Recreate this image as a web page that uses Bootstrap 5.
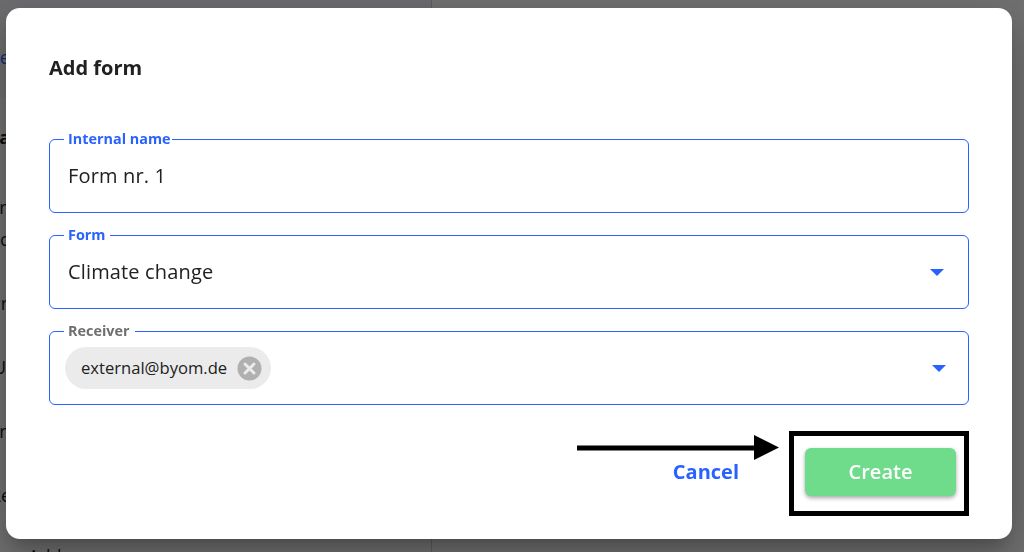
<!DOCTYPE html>
<html lang="en">
<head>
<meta charset="utf-8">
<title>Add form</title>
<link href="https://cdn.jsdelivr.net/npm/bootstrap@5.3.0/dist/css/bootstrap.min.css" rel="stylesheet">
<style>
html,body{height:100%;overflow:hidden}
body{font-family:"Open Sans","Noto Sans",sans-serif;color:#212121;background:#fff}
.page-behind{height:552px;overflow:hidden}
.page-side{width:432px;border-right:1px solid #d4d4d4;font-size:18px;line-height:20px;white-space:nowrap;position:relative}
.page-top{height:98px;background:#f6f6fa;padding-top:47px;margin-bottom:29px}
.page-side .row-txt{height:20px;margin-left:-14px}
.page-side .row-txt.near{margin-left:-10px}
.page-side .row-txt.edge{margin-left:-7px}
.page-top .row-txt{color:#2962ff}
.page-side .hd{font-weight:700;margin-bottom:50px}
.gap-a{margin-bottom:12px}
.gap-b{margin-bottom:44px}
.gap-c{margin-bottom:41px}
.page-side .tail{margin:0 0 0 28px}
.dim{position:fixed;inset:0;background:rgba(0,0,0,.56)}
.sheet{position:fixed;left:6px;top:8px;width:1006px;height:531px;background:#fff;border-radius:14px;padding:47px 43px 0;box-shadow:0 11px 15px -7px rgba(0,0,0,.2),0 24px 38px 3px rgba(0,0,0,.14),0 9px 46px 8px rgba(0,0,0,.12)}
.sheet-title{font-size:20px;font-weight:700;line-height:26px;margin:0 0 58px}
.fbox{height:74px;border:1px solid #2962ff;border-radius:6px;margin-bottom:22px;padding:0 18px;position:relative;display:flex;align-items:center;font-size:20px;letter-spacing:.15px;line-height:26px}
.fbox .flabel{position:absolute;left:14px;top:-10px;background:#fff;padding:0 5px 0 4px;font-size:14.4px;font-weight:700;letter-spacing:0;line-height:18px;color:#2962ff}
.fbox .flabel.tight{padding-right:1px}
.fbox .flabel.muted{color:#6f6f6f}
.caret{position:absolute;width:0;height:0;border-left:7px solid transparent;border-right:7px solid transparent;border-top:7px solid #2962ff;top:33px;right:24px}
.caret.c2{right:22px;top:33px}
.chip-mail{display:inline-flex;align-items:center;height:42px;background:#ebebeb;border-radius:21px;padding:0 9px 0 16px;margin-left:-3px;font-size:16.6px;letter-spacing:0;gap:10px}
.chip-x{display:block;width:25px;height:25px}
.foot{margin-top:26px;height:85px}
.btn-cancel{font-size:20px;font-weight:700;color:#2962ff;padding:0;border:0;background:none;margin-right:50px;margin-top:-3px}
.frame{width:180px;height:85px;border:5px solid #000;display:flex;align-items:flex-start;justify-content:flex-end;padding:12px 8px 0 0}
.btn-create{width:151px;height:48px;background:#6edc8a;color:#fff;border:0;border-radius:6px;font-size:20px;font-weight:600;box-shadow:0 2px 4px rgba(0,0,0,.35)}
.btn-create:hover{background:#6edc8a;color:#fff}
.pointer{position:absolute;left:571px;top:427px;width:202px;height:25px}
</style>
</head>
<body>
<div class="page-behind d-flex">
  <div class="page-side">
    <div class="page-top"><div class="row-txt near">Search</div></div>
    <div class="row-txt hd">Data</div>
    <div class="row-txt near gap-a">Fr</div>
    <div class="row-txt gap-b">Oc</div>
    <div class="row-txt near gap-b">Pr</div>
    <div class="row-txt edge gap-b">Us</div>
    <div class="row-txt near gap-b">Fr</div>
    <div class="row-txt near gap-c">Re</div>
    <div class="row-txt tail">Add</div>
  </div>
</div>
<div class="dim"></div>
<div class="sheet" role="dialog">
  <h5 class="sheet-title">Add form</h5>
  <div class="fbox"><span class="flabel tight">Internal name</span>Form nr. 1</div>
  <div class="fbox"><span class="flabel">Form</span>Climate change<span class="caret"></span></div>
  <div class="fbox"><span class="flabel muted">Receiver</span>
    <span class="chip-mail">external@byom.de
      <svg class="chip-x" viewBox="0 0 25 25"><circle cx="12.5" cy="12.5" r="12" fill="#b0b0b0"/><path d="M8 8l9 9M17 8l-9 9" stroke="#ebebeb" stroke-width="3" stroke-linecap="round"/></svg>
    </span>
    <span class="caret c2"></span>
  </div>
  <div class="foot d-flex justify-content-end align-items-center">
    <button class="btn-cancel" type="button">Cancel</button>
    <div class="frame"><button class="btn btn-create" type="button">Create</button></div>
  </div>
  <svg class="pointer" viewBox="0 0 202 25"><path d="M0 10.5h178v5H0z" fill="#000"/><path d="M177 0l25 12.5-25 12.5z" fill="#000"/></svg>
</div>
<script src="https://cdn.jsdelivr.net/npm/bootstrap@5.3.0/dist/js/bootstrap.bundle.min.js"></script>
</body>
</html>
